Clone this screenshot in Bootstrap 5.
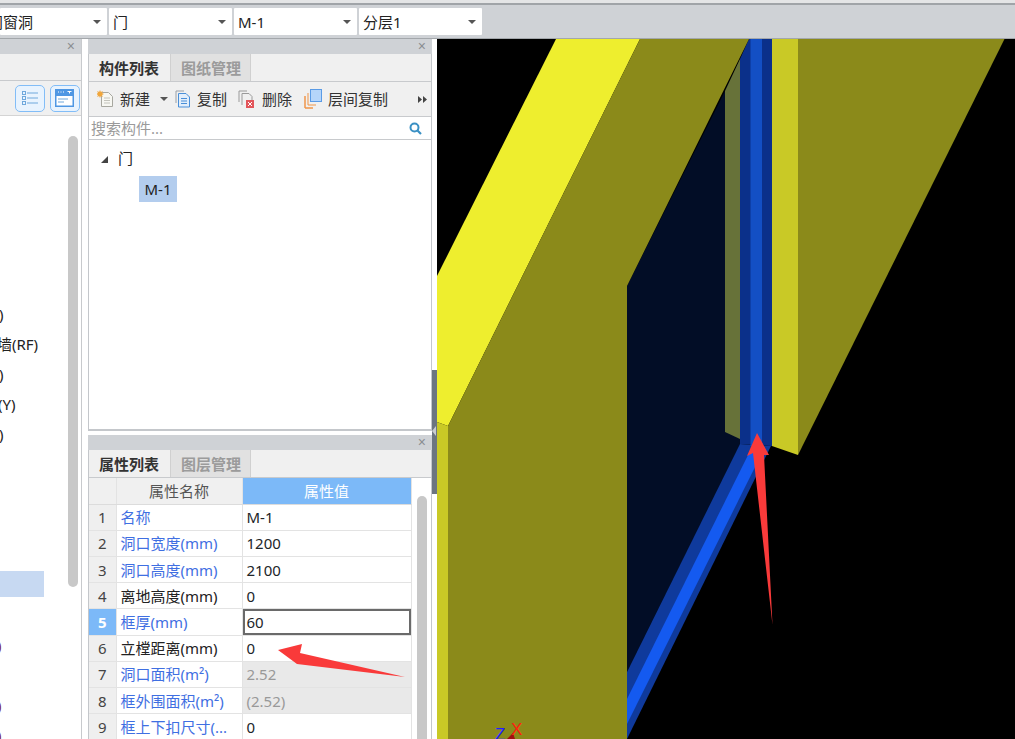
<!DOCTYPE html>
<html lang="zh-CN">
<head>
  <meta charset="UTF-8">
  <meta name="viewport" content="width=device-width, initial-scale=1.0">
  <title>门窗洞 | 构件列表</title>
  <link href="https://cdn.jsdelivr.net/npm/bootstrap@5.3.0/dist/css/bootstrap.min.css" rel="stylesheet">
  <style>
    html, body { height: 739px; overflow: hidden; }
    body {
      position: relative;
      background: #fff;
      color: #222;
      font: 15px/20px "Noto Sans", "Noto Sans CJK SC", sans-serif;
    }
    .top-strip { height: 39px; background: #cfd2d6; border-top: 3px solid #e4e5e6; border-bottom: 1px solid #a3a7ab; box-shadow: inset 0 2px 0 #a0a4a8; padding-top: 5px; gap: 2.5px; }
    .combo { height: 27px; width: 122.5px; background: #fff; padding: 0 5px 0 4px; border-radius: 1px; flex: none; }
    .combo.first { width: 106.5px; padding-left: 0; }
    .clip-char { margin-left: -12px; }
    .caret-down { width: 0; height: 0; border: 4px solid transparent; border-top: 4px solid #555; border-bottom: 0; margin-right: 1px; flex: none; }
    .work-row { height: 700px; }
    .left-pane { width: 82px; border-right: 1px solid #c8cacd; flex: none; }
    .mid-pane { width: 344px; margin-left: 6px; flex: none; }
    .split-bar { width: 5px; flex: none; background: #fff; }
    .split-grip { margin-top: 331px; height: 124px; background: #6c7580; position: relative; }
    .split-grip::after { content: ""; position: absolute; left: 0; top: 56px; border: 5px solid transparent; border-right: 4px solid #c9ccd0; border-left: 0; }
    .scene { width: 578px; height: 700px; flex: none; background: #000; display: block; }
    .pane-title { height: 15px; background: #cfd2d6; padding-right: 6px; flex: none; }
    .x-mark { font: 14px/15px "Liberation Sans", sans-serif; color: #8a8d91; }
    .pane-tabs { height: 28px; background: #f0f0f0; border-bottom: 1px solid #c8cacd; flex: none; }
    .tab-on, .tab-off { height: 27px; line-height: 28px; white-space: nowrap; }
    .tab-on { font-weight: 700; color: #333; width: 81px; padding-left: 10px; }
    .tab-off { color: #9b9b9b; background: #e1e1e1; border-left: 1px solid #d0d0d0; border-right: 1px solid #d0d0d0; font-weight: 700; width: 81px; padding-left: 10px; }
    .left-tabs { height: 27px; background: #f0f0f0; border-bottom: 1px solid #c8cacd; flex: none; }
    .left-tools { height: 35px; background: #f0f0f0; border-bottom: 1px solid #d4d4d4; padding-right: 1px; gap: 5px; flex: none; }
    .view-btn { width: 30px; height: 27px; padding: 0; border: 1.5px solid #82bdf7; border-radius: 5px; background: #e8f3fe; }
    .left-list { position: relative; padding-top: 183px; }
    .clip-line { height: 30px; line-height: 30px; white-space: nowrap; margin-left: -1px; }
    .clip-line.deep { margin-left: -3px; }
    .clip-line.mid-cut { margin-left: -2px; }
    .list-hit { height: 26px; width: 44px; background: #c7d9f2; margin-top: 122px; }
    .clip-dot { height: 30px; line-height: 30px; color: #7a1d4a; margin-left: -3px; }
    .first-dot { margin-top: 33px; }
    .far-dot { margin-top: 30px; }
    .left-thumb { position: absolute; left: 68px; top: 20px; width: 10px; height: 451px; background: #c8c8c8; border-radius: 5px; }
    .mid-box { border-left: 1px solid #c4c7cb; border-right: 1px solid #c4c7cb; }
    .upper-box { height: 377px; flex: none; border-bottom: 2px solid #c4c7cb; }
    .comp-tools { height: 35px; background: #f0f0f0; border-bottom: 1px solid #c8cacd; padding-left: 8px; flex: none; }
    .tool-btn { padding: 0; border: 0; border-radius: 0; color: #333; font-size: 15px; line-height: 20px; gap: 6px; white-space: nowrap; }
    .tool-near { margin-left: 7px; }
    .tool-mid { margin-left: 11px; }
    .tool-gap { margin-left: 12px; }
    .tool-more { margin-right: 4px; }
    .search-row { height: 23px; border-bottom: 1px solid #c8cacd; padding-right: 9px; flex: none; }
    .search-input { border: 0; border-radius: 0; padding: 0 0 0 2px; height: 22px; font-size: 15px; color: #777; background: transparent; }
    .search-input::placeholder { color: #9a9a9a; }
    .tree-head { padding: 8px 0 0 12px; height: 36px; gap: 10px; flex: none; }
    .tree-arrow { width: 0; height: 0; border-bottom: 7px solid #444; border-left: 7px solid transparent; margin-top: 1px; }
    .tree-pick { margin-left: 50px; width: 38px; height: 26px; line-height: 26px; text-align: center; background: #b3cdee; color: #222; flex: none; }
    .pane-gap { height: 4px; flex: none; }
    .prop-wrap { position: relative; }
    .prop-grid { table-layout: fixed; width: 322px; margin: 0; border-collapse: collapse; --bs-table-bg: transparent; }
    .prop-grid th, .prop-grid td { height: 26.2px; padding: 0 4px; border: 0; border-bottom: 1px solid #e3e3e3; border-right: 1px solid #e3e3e3; font-weight: 400; line-height: 20px; vertical-align: middle; white-space: nowrap; overflow: hidden; }
    .prop-grid th { background: #f0f0f0; color: #555; text-align: center; border-bottom-color: #dcdcdc; }
    .prop-grid th.val-head { background: #7cb9f8; color: #fff; }
    .prop-grid .num-cell { background: #efefef; text-align: center; color: #444; padding: 0; }
    .prop-grid .num-on { background: #7cb9f8; color: #fff; font-weight: 700; }
    .prop-grid .blue-name { color: #3f6fe2; }
    .prop-grid .dark-name { color: #222; }
    .prop-grid .grey-val { background: #e9e9e9; color: #999; }
    .prop-grid .edit-val { box-shadow: inset 0 0 0 2px #6a6a6a; }
    .prop-thumb { position: absolute; left: 328px; top: 18px; width: 10px; height: 260px; background: #c8c8c8; border-radius: 5px 5px 0 0; }
    .marks { position: absolute; left: 0; top: 0; pointer-events: none; }
  </style>
</head>
<body>
  <div class="top-strip d-flex">
    <div class="combo first d-flex align-items-center justify-content-between"><span class="clip-char">门窗洞</span><i class="caret-down"></i></div>
    <div class="combo d-flex align-items-center justify-content-between"><span>门</span><i class="caret-down"></i></div>
    <div class="combo d-flex align-items-center justify-content-between"><span>M-1</span><i class="caret-down"></i></div>
    <div class="combo d-flex align-items-center justify-content-between"><span>分层1</span><i class="caret-down"></i></div>
  </div>

  <div class="work-row d-flex">
    <!-- left tree, cut off by the window edge -->
    <div class="left-pane d-flex flex-column">
      <div class="pane-title d-flex justify-content-end"><span class="x-mark">×</span></div>
      <div class="left-tabs"></div>
      <div class="left-tools d-flex align-items-center justify-content-end">
        <button class="btn view-btn d-flex align-items-center justify-content-center" type="button" aria-label="列表">
          <svg width="20" height="16" viewBox="0 0 20 16" fill="none" stroke="#6fa8dc"><rect x="2.500" y="1.500" width="3" height="3"/><rect x="2.500" y="6.500" width="3" height="3"/><rect x="2.500" y="11.500" width="3" height="3"/><path d="M7 3h11M7 8h11M7 13h11"/></svg>
        </button>
        <button class="btn view-btn d-flex align-items-center justify-content-center" type="button" aria-label="详情">
          <svg width="20" height="18" viewBox="0 0 20 18"><rect width="19" height="18" fill="#4f97e3"/><rect x="1.500" y="7" width="16" height="9.500" fill="#fff"/><path d="M3 3h1M5.500 3h1M8 3h1M12.500 2.500h4M14.500 2.500v2" stroke="#fff" fill="none"/><path d="M3 10h10M3 13h6" stroke="#6fa8dc" fill="none"/></svg>
        </button>
      </div>
      <div class="left-list flex-grow-1 overflow-hidden">
        <div class="left-thumb"></div>
        <div class="clip-line">)</div>
        <div class="clip-line deep">墙(RF)</div>
        <div class="clip-line">)</div>
        <div class="clip-line mid-cut">(Y)</div>
        <div class="clip-line">)</div>
        <div class="list-hit"></div>
        <div class="clip-dot first-dot">)</div>
        <div class="clip-dot far-dot">)</div>
        <div class="clip-dot">)</div>
      </div>
    </div>

    <div class="mid-pane d-flex flex-column">
      <div class="pane-title d-flex justify-content-end"><span class="x-mark">×</span></div>
      <div class="mid-box upper-box d-flex flex-column">
        <div class="pane-tabs d-flex"><div class="tab-on">构件列表</div><div class="tab-off">图纸管理</div></div>
        <div class="comp-tools d-flex align-items-center">
          <button class="btn tool-btn d-flex align-items-center" type="button">
            <svg width="17" height="18" viewBox="0 0 17 18"><path d="M4.500 2.500h7l4 4v10h-11z" fill="#f7f7f2" stroke="#a8a8a0"/><path d="M7 8h6M7 10.500h6M7 13h6" stroke="#c4c4bc"/><path d="M3 0l.9 2 2-.9-.9 2 2 .9-2 .9.9 2-2-.9-.9 2-.9-2-2 .9.9-2-2-.9 2-.9-.9-2 2 .9z" fill="#f0a63c"/></svg>
            <span>新建</span><i class="caret-down ms-1 me-0"></i>
          </button>
          <button class="btn tool-btn tool-near d-flex align-items-center" type="button">
            <svg width="16" height="18" viewBox="0 0 16 18" fill="none"><path d="M1 13V1h8" stroke="#9aa0a8"/><path d="M3.500 3.500h7.500l3.500 3.500v10h-11z" fill="#e2eefb" stroke="#4a8fd8"/><path d="M6 8.500h6M6 11h6M6 13.500h6" stroke="#4a8fd8"/></svg>
            <span>复制</span>
          </button>
          <button class="btn tool-btn tool-mid d-flex align-items-center" type="button">
            <svg width="18" height="18" viewBox="0 0 18 18" fill="none"><path d="M1 12V1h8" stroke="#9a9a9a"/><path d="M4 15V3.500h7l3 3V10" stroke="#9a9a9a"/><rect x="8" y="10" width="8" height="8" fill="#e2555a"/><path d="M10 12l4 4M14 12l-4 4" stroke="#fff"/></svg>
            <span>删除</span>
          </button>
          <button class="btn tool-btn tool-gap d-flex align-items-center" type="button">
            <svg width="18" height="20" viewBox="0 0 18 20" fill="none"><path d="M1 19V7M1 19h8" stroke="#ef9549" stroke-width="1.500"/><path d="M4 16V4M4 16h8" stroke="#ef9549"/><rect x="6.500" y=".5" width="11" height="12" fill="#b5d5fa" stroke="#5a9be6"/></svg>
            <span>层间复制</span>
          </button>
          <svg class="tool-more ms-auto flex-shrink-0" width="9" height="7" viewBox="0 0 9 7" fill="#444"><path d="M0 0l4 3.500L0 7zM5 0l4 3.500L5 7z"/></svg>
        </div>
        <div class="search-row d-flex align-items-center">
          <input class="form-control search-input shadow-none" type="text" placeholder="搜索构件...">
          <svg class="flex-shrink-0" width="13" height="13" viewBox="0 0 13 13" fill="none" stroke="#3a90c4"><circle cx="5.500" cy="5.500" r="4" stroke-width="2"/><path d="M8.500 8.500l3.500 3.500" stroke-width="2.200"/></svg>
        </div>
        <div class="tree-head d-flex align-items-start"><i class="tree-arrow mt-2"></i><span>门</span></div>
        <div class="tree-pick">M-1</div>
      </div>
      <div class="pane-gap"></div>
      <div class="pane-title d-flex justify-content-end"><span class="x-mark">×</span></div>
      <div class="mid-box flex-grow-1 overflow-hidden">
        <div class="pane-tabs d-flex"><div class="tab-on">属性列表</div><div class="tab-off">图层管理</div></div>
        <div class="prop-wrap">
          <div class="prop-thumb"></div>
          <table class="table prop-grid">
            <colgroup><col style="width:27px"><col style="width:126px"><col style="width:169px"></colgroup>
            <thead>
              <tr><th></th><th>属性名称</th><th class="val-head">属性值</th></tr>
            </thead>
            <tbody>
              <tr><td class="num-cell">1</td><td class="blue-name">名称</td><td>M-1</td></tr>
              <tr><td class="num-cell">2</td><td class="blue-name">洞口宽度(mm)</td><td>1200</td></tr>
              <tr><td class="num-cell">3</td><td class="blue-name">洞口高度(mm)</td><td>2100</td></tr>
              <tr><td class="num-cell">4</td><td class="dark-name">离地高度(mm)</td><td>0</td></tr>
              <tr><td class="num-cell num-on">5</td><td class="blue-name">框厚(mm)</td><td class="edit-val">60</td></tr>
              <tr><td class="num-cell">6</td><td class="dark-name">立樘距离(mm)</td><td>0</td></tr>
              <tr><td class="num-cell">7</td><td class="blue-name">洞口面积(m²)</td><td class="grey-val">2.52</td></tr>
              <tr><td class="num-cell">8</td><td class="blue-name">框外围面积(m²)</td><td class="grey-val">(2.52)</td></tr>
              <tr><td class="num-cell">9</td><td class="blue-name">框上下扣尺寸(...</td><td>0</td></tr>
            </tbody>
          </table>
        </div>
      </div>
    </div>

    <div class="split-bar"><div class="split-grip"></div></div>

    <!-- 3D view of the door opening -->
    <svg class="scene" viewBox="437 39 578 700">
      <rect x="437" y="39" width="578" height="700" fill="#000"/>
      <polygon points="627,286 725,91 740,60 740,445 627,672" fill="#020d26"/>
      <polygon points="725,91 740,59 740,439 725,432" fill="#677239"/>
      <polygon points="627,672 740,444 771,446 627,739" fill="#0f3a9c"/>
      <polygon points="627,699 752,447 765,447 627,724" fill="#145af0"/>
      <polygon points="740,59 749,39 772,39 772,446 740,444" fill="#0b308a"/>
      <rect x="750.500" y="39" width="11.500" height="407" fill="#134fc4"/>
      <polygon points="772,39 798,39 798,455 772,446" fill="#c9c926"/>
      <polygon points="798,39 1004.500,39 798,455" fill="#8b8a1a"/>
      <polygon points="556,39 640,39 448,426 437,422 437,276" fill="#eeee2e"/>
      <polygon points="640,39 749,39 627,286 627,739 448,739 448,426" fill="#8b8a1a"/>
      <polygon points="437,422 448,426 448,739 437,739" fill="#c9c926"/>
      <polygon points="507,739 513,733 515,739" fill="#a01010"/>
      <text x="495" y="740" font-family="Liberation Sans, sans-serif" font-size="17" fill="#2020ff">Z</text>
      <text x="511" y="735" font-family="Liberation Sans, sans-serif" font-size="17" fill="#ff2010">X</text>
    </svg>
  </div>

  <!-- red annotation arrows drawn over the screenshot -->
  <svg class="marks" width="1015" height="739" viewBox="0 0 1015 739">
    <polygon points="757,433 769,455 764,455 772.500,625 753,453 747,456" fill="#f93a3a"/>
    <polygon points="278,650 302,644 300,653 405,677 297,664" fill="#f93a3a"/>
  </svg>
</body>
</html>
